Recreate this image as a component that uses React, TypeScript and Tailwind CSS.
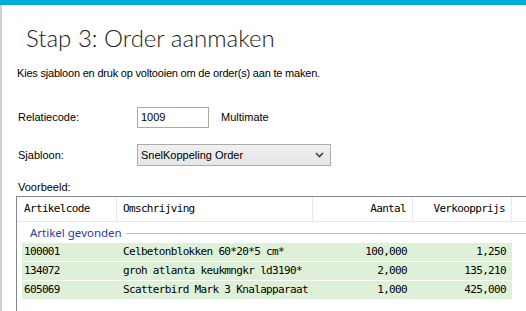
import React from "react";

const rows = [
  ["100001", "Celbetonblokken 60*20*5 cm*", "100,000", "1,250"],
  ["134072", "groh atlanta keukmngkr ld3190*", "2,000", "135,210"],
  ["605069", "Scatterbird Mark 3 Knalapparaat", "1,000", "425,000"],
];

const mono = { fontFamily: '"DejaVu Sans Mono", "Liberation Mono", monospace' };

export default function App() {
  return (
    <div className="w-[526px] h-[311px] overflow-hidden bg-white flex flex-col" style={{ fontFamily: '"Liberation Sans", Arial, sans-serif' }}>
      <div className="h-[5px] bg-[#00acd8] shrink-0" />
      <div className="flex-1 border-l-2 border-[#d0d0d0] flex flex-col">
        <div className="pl-[24px] pt-[18px] h-[57px] text-[24px] leading-[30px] font-light text-[#1a1a1a]" style={{ fontFamily: 'Lato, "Noto Sans", sans-serif' }}>
          Stap 3: Order aanmaken
        </div>
        <div className="pl-[15px] h-[40px] pt-[4px] text-[11px] leading-[14px] tracking-[-0.2px] text-black">
          Kies sjabloon en druk op voltooien om de order(s) aan te maken.
        </div>
        <div className="flex items-center h-[22px] mt-[4px] text-[11px] text-black">
          <div className="w-[135px] pl-[16px]">Relatiecode:</div>
          <div className="w-[72px] h-[21px] border border-[#a9a9a9] flex items-center pl-[3px] bg-white">1009</div>
          <div className="pl-[12px]">Multimate</div>
        </div>
        <div className="flex items-center h-[22px] mt-[16px] text-[11px] text-black">
          <div className="w-[135px] pl-[16px]">Sjabloon:</div>
          <div className="w-[194px] h-[22px] border border-[#acacac] bg-[linear-gradient(#f0f0f0,#e5e5e5)] flex items-center justify-between pl-[3px] pr-[6px]">
            <span>SnelKoppeling Order</span>
            <svg width="9" height="6" viewBox="0 0 9 6">
              <path d="M1 1 L4.5 4.5 L8 1" stroke="#404040" strokeWidth="1.6" fill="none" />
            </svg>
          </div>
        </div>
        <div className="pl-[16px] mt-[14px] h-[16px] text-[11px] leading-[14px] text-black">Voorbeeld:</div>
        <div className="ml-[14px] w-[540px] flex-1 border border-[#828790] border-r-0 border-b-0 flex flex-col text-[11px] tracking-[-0.66px] text-black" style={mono}>
          <div className="flex h-[25px] items-center border-b border-[#e3e9ef] shrink-0">
            <div className="w-[100px] h-full flex items-center pl-[7px] border-r border-[#e8e8e8]">Artikelcode</div>
            <div className="w-[196px] h-full flex items-center pl-[6px] border-r border-[#e8e8e8]">Omschrijving</div>
            <div className="w-[100px] h-full flex items-center justify-end pr-[6px] border-r border-[#e8e8e8]">Aantal</div>
            <div className="w-[99px] h-full flex items-center justify-end pr-[6px] border-r border-[#e8e8e8]">Verkoopprijs</div>
            <div className="flex-1" />
          </div>
          <div className="flex items-center h-[21px] pl-[13px]">
            <span className="text-[11.5px] tracking-normal text-[#2a3aa8]" style={{ fontFamily: '"Noto Sans", "Open Sans", sans-serif' }}>Artikel gevonden</span>
            <div className="flex-1 h-px bg-[#b0c0d8] ml-[4px] mt-[1px]" />
          </div>
          <div className="flex flex-col gap-px ml-[5px] w-[490px]">
            {rows.map((r) => (
              <div key={r[0]} className="flex h-[18px] items-center bg-[#def0d8]">
                <div className="w-[95px] pl-[2px]">{r[0]}</div>
                <div className="w-[196px] pl-[6px]">{r[1]}</div>
                <div className="w-[100px] text-right pr-[6px]">{r[2]}</div>
                <div className="w-[99px] text-right pr-[6px]">{r[3]}</div>
              </div>
            ))}
          </div>
        </div>
      </div>
    </div>
  );
}
